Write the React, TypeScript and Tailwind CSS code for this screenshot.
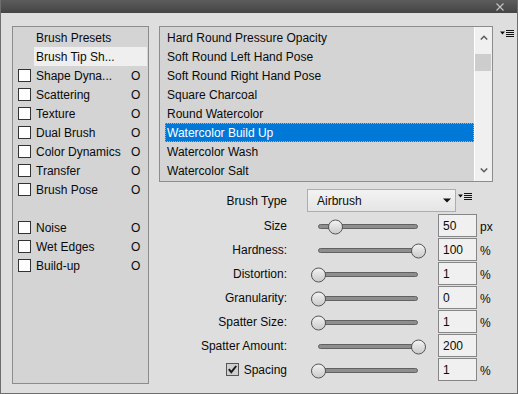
import React from "react";

const leftRows: (null | { label: string; check: boolean; o: boolean; hl?: boolean })[] = [
  { label: "Brush Presets", check: false, o: false },
  { label: "Brush Tip Sh...", check: false, o: false, hl: true },
  { label: "Shape Dyna...", check: true, o: true },
  { label: "Scattering", check: true, o: true },
  { label: "Texture", check: true, o: true },
  { label: "Dual Brush", check: true, o: true },
  { label: "Color Dynamics", check: true, o: true },
  { label: "Transfer", check: true, o: true },
  { label: "Brush Pose", check: true, o: true },
  null,
  { label: "Noise", check: true, o: true },
  { label: "Wet Edges", check: true, o: true },
  { label: "Build-up", check: true, o: true },
];

const listItems = [
  "Hard Round Pressure Opacity",
  "Soft Round Left Hand Pose",
  "Soft Round Right Hand Pose",
  "Square Charcoal",
  "Round Watercolor",
  "Watercolor Build Up",
  "Watercolor Wash",
  "Watercolor Salt",
];

const sliders = [
  { label: "Size", pos: 17, value: "50", unit: "px" },
  { label: "Hardness:", pos: 100, value: "100", unit: "%" },
  { label: "Distortion:", pos: 0, value: "1", unit: "%" },
  { label: "Granularity:", pos: 0, value: "0", unit: "%" },
  { label: "Spatter Size:", pos: 0, value: "1", unit: "%" },
  { label: "Spatter Amount:", pos: 100, value: "200", unit: "" },
  { label: "Spacing", pos: 0, value: "1", unit: "%", check: true },
];

function MenuIcon() {
  return (
    <svg width="14" height="7" viewBox="0 0 14 7" className="block">
      <polygon points="0,1.5 5,1.5 2.5,4.5" fill="#111" />
      <rect x="6" y="0" width="8" height="1" fill="#111" />
      <rect x="6" y="2" width="8" height="1" fill="#111" />
      <rect x="6" y="4" width="8" height="1" fill="#111" />
      <rect x="6" y="6" width="8" height="1" fill="#111" />
    </svg>
  );
}

function Checkbox({ checked }: { checked?: boolean }) {
  if (checked) {
    return (
      <div className="w-[13px] h-[13px] border border-[#555] bg-[#cfcfcf] flex items-center justify-center">
        <svg width="11" height="11" viewBox="0 0 11 11">
          <path d="M1.8 5.2 L4.3 8.2 L9.2 2" stroke="#1a1a1a" strokeWidth="2" fill="none" />
        </svg>
      </div>
    );
  }
  return <div className="w-[13px] h-[13px] border border-[#333] bg-white" />;
}

export default function App() {
  return (
    <div className="w-[518px] h-[394px] flex flex-col bg-[#dedede] border-x border-b border-[#6e6e6e] font-['Liberation_Sans',Arial,sans-serif] text-[12px] text-[#0a0a0a] overflow-hidden">
      {/* title bar */}
      <div className="h-[13px] shrink-0 bg-gradient-to-b from-[#5c5c5c] to-[#454545] flex justify-end items-center pr-[13px]">
        <svg width="8" height="8" viewBox="0 0 8 8">
          <path d="M0.5 0.5 L7.5 7.5 M7.5 0.5 L0.5 7.5" stroke="#c4c4c4" strokeWidth="1.1" />
        </svg>
      </div>

      <div className="flex pt-[13px] pl-[11px]">
        {/* left panel */}
        <div className="w-[137px] h-[358px] border border-[#8c8c8c] bg-[#d4d4d4] pt-[1px] flex flex-col">
          {leftRows.map((r, i) =>
            r === null ? (
              <div key={i} className="h-[19px]" />
            ) : (
              <div key={i} className="h-[19px] flex items-center pl-[5px]">
                <div className="w-[13px] h-[13px]">{r.check && <Checkbox />}</div>
                <div
                  className={
                    "ml-[3px] mr-[1px] flex-1 h-[19px] flex items-center pl-[2px] " +
                    (r.hl ? "bg-[#efefef]" : "")
                  }
                >
                  <span className="flex-1 whitespace-nowrap">{r.label}</span>
                  {r.o && <span className="w-[9px] mr-[7px]">O</span>}
                </div>
              </div>
            )
          )}
        </div>

        {/* right column */}
        <div className="ml-[10px] flex flex-col">
          <div className="flex items-start">
            <div className="w-[334px] h-[156px] border border-[#8c8c8c] bg-[#d4d4d4] flex">
              <div className="flex-1 pl-[5px] pt-[1px] flex flex-col">
                {listItems.map((t, i) =>
                  i === 5 ? (
                    <div
                      key={i}
                      className="h-[19px] flex items-center pl-[1px] bg-[#0078d7] text-white border border-dotted border-[#e8a060] whitespace-nowrap"
                    >
                      {t}
                    </div>
                  ) : (
                    <div key={i} className="h-[19px] flex items-center pl-[2px] whitespace-nowrap">
                      {t}
                    </div>
                  )
                )}
              </div>
              <div className="w-[18px] bg-[#f0f0f0] border-l border-white flex flex-col">
                <div className="h-[20px] flex items-center justify-center pt-[1px]">
                  <svg width="8" height="5" viewBox="0 0 8 5">
                    <path d="M0.8 4.5 L4 1.3 L7.2 4.5" stroke="#606060" strokeWidth="1.6" fill="none" />
                  </svg>
                </div>
                <div className="mt-[7px] h-[17px] mr-[1px] bg-[#cdcdcd]" />
                <div className="flex-1" />
                <div className="h-[20px] flex items-center justify-center pb-[1px]">
                  <svg width="8" height="5" viewBox="0 0 8 5">
                    <path d="M0.8 0.5 L4 3.7 L7.2 0.5" stroke="#606060" strokeWidth="1.6" fill="none" />
                  </svg>
                </div>
              </div>
            </div>
            <div className="ml-[7px] mt-[4px]">
              <MenuIcon />
            </div>
          </div>

          {/* brush type */}
          <div className="mt-[7px] h-[23px] flex items-center">
            <div className="w-[128px] text-right">Brush Type</div>
            <div className="ml-[20px] w-[149px] h-[23px] border border-[#adadad] bg-gradient-to-b from-[#f3f3f3] to-[#e5e5e5] flex items-center pl-[9px] pr-[4px]">
              <span className="flex-1">Airbrush</span>
              <svg width="8" height="5" viewBox="0 0 8 5">
                <polygon points="0,0.5 8,0.5 4,4.5" fill="#111" />
              </svg>
            </div>
            <div className="ml-[2px] self-start mt-[4px]">
              <MenuIcon />
            </div>
          </div>

          <div className="mt-[2px] flex flex-col">
            {sliders.map((s, i) => (
              <div key={i} className="h-[23px] mb-[1px] flex items-center">
                <div className="w-[128px] flex items-center justify-end gap-[5px]">
                  {s.check && <Checkbox checked />}
                  <span>{s.label}</span>
                </div>
                <div className="w-[151px] h-full flex items-center">
                  <div className="ml-[31px] w-[100px] h-[5px] relative rounded-full bg-[#8e8e8e] border border-[#626262] mt-[2px]">
                    <div
                      className="absolute top-1/2 -translate-y-1/2 w-[15px] h-[15px] rounded-full border border-[#555] bg-gradient-to-b from-[#f2f2f2] to-[#cbcbcb]"
                      style={{ left: s.pos - 8 }}
                    />
                  </div>
                </div>
                <div className="w-[39px] h-[23px] border border-[#868686] bg-[#f0f0f0] flex items-center pl-[4px]">
                  {s.value}
                </div>
                <div className="ml-[3px] self-start mt-[4px]">{s.unit}</div>
              </div>
            ))}
          </div>
        </div>
      </div>
    </div>
  );
}
